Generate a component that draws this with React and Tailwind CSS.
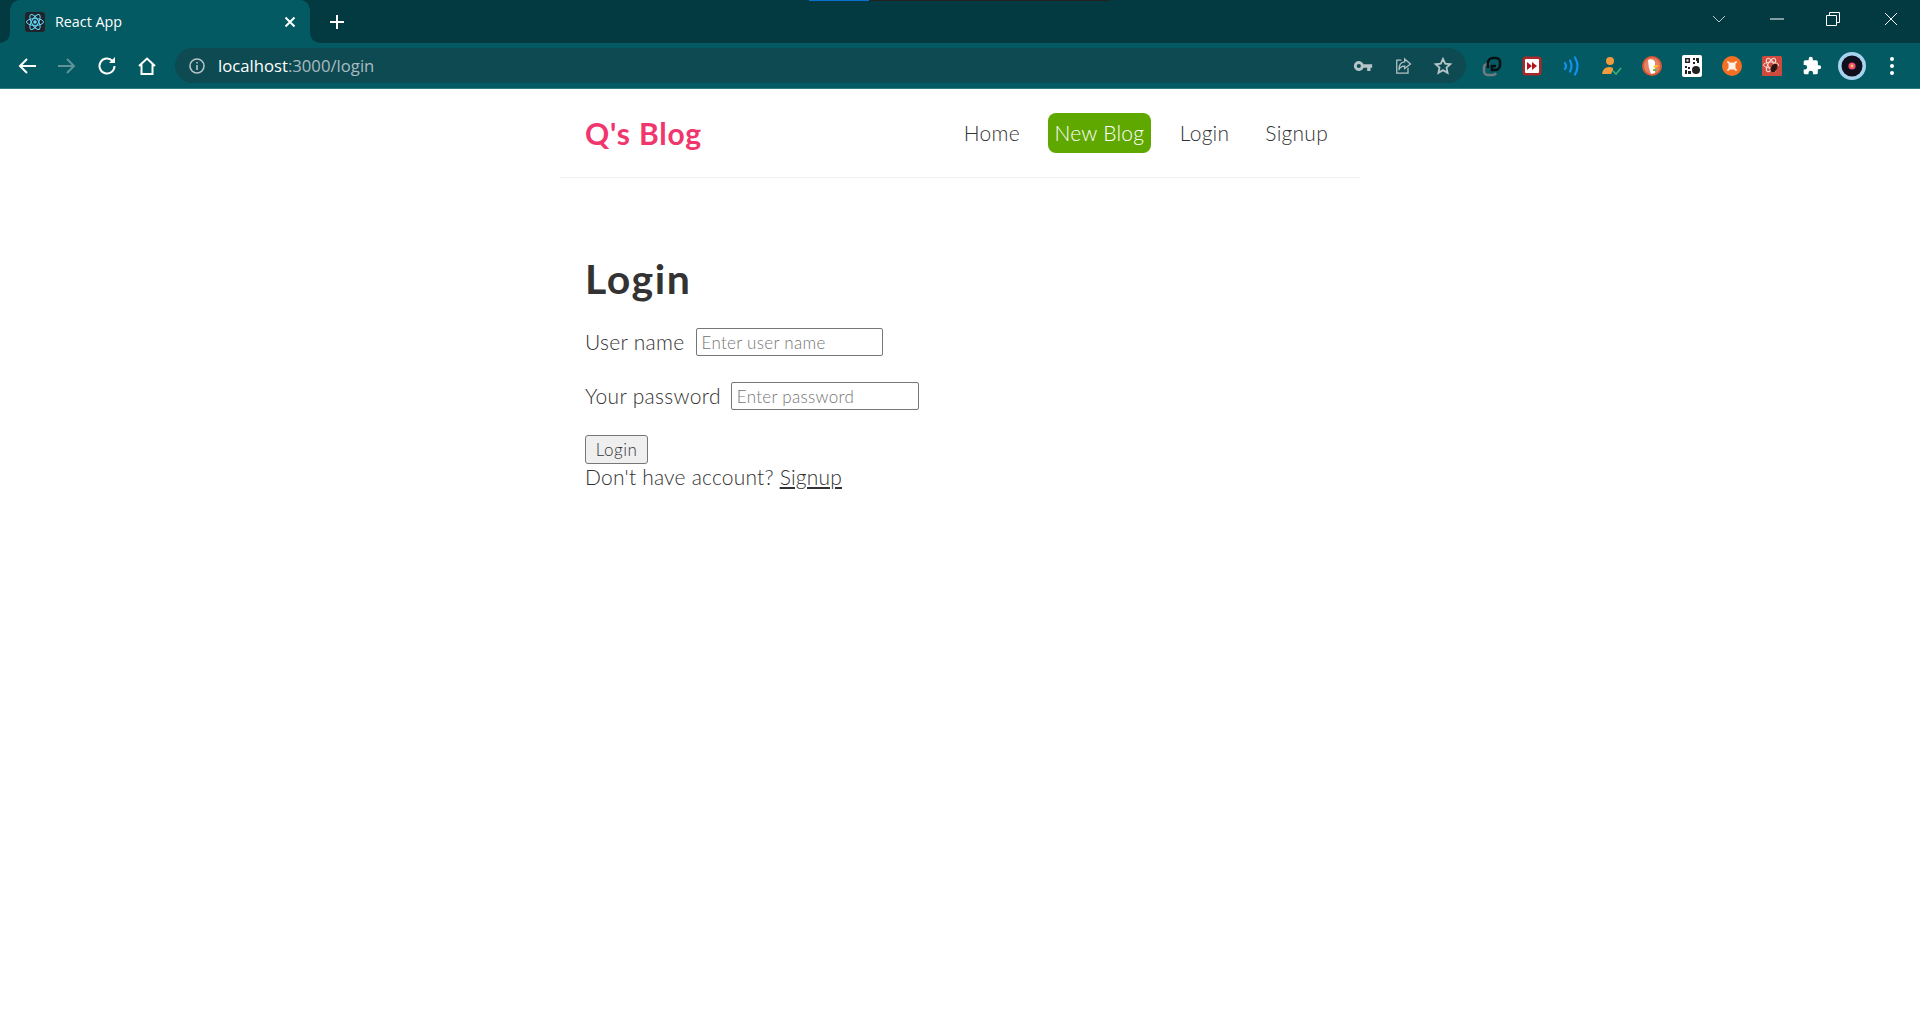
import React from 'react';

const uiFont = { fontFamily: '"Open Sans", "Noto Sans", sans-serif' };

const ReactFavicon = () => (
  <svg width="20" height="20" viewBox="0 0 20 20" fill="none">
    <rect width="20" height="20" rx="3" fill="#20232a" />
    <circle cx="10" cy="10" r="1.8" fill="#61dafb" />
    <g stroke="#61dafb" strokeWidth="1">
      <ellipse cx="10" cy="10" rx="8.5" ry="3.4" />
      <ellipse cx="10" cy="10" rx="8.5" ry="3.4" transform="rotate(60 10 10)" />
      <ellipse cx="10" cy="10" rx="8.5" ry="3.4" transform="rotate(120 10 10)" />
    </g>
  </svg>
);

const ToolIcon = ({ children, className = 'text-white' }) => (
  <svg width="24" height="24" viewBox="0 0 24 24" fill="none" stroke="currentColor" strokeWidth="2" className={className}>
    {children}
  </svg>
);

const ExtIcons = () => (
  <div className="flex items-center ml-[6px]">
    <div className="w-[40px] flex justify-center">
      <svg width="20" height="22" viewBox="0 0 20 22" fill="none" strokeWidth="2.6">
        <path d="M8 9 H5 a3.6 3.6 0 0 0 -3 4 v3 a4 4 0 0 0 4 4 h5 a4 4 0 0 0 3 -2" stroke="#6f7b80" />
        <path d="M6 13 v-5 a5 5 0 0 1 5 -5 h3 a4 4 0 0 1 4 4 v3 a5 5 0 0 1 -5 5 h-3 v-4 h4" stroke="#061014" />
      </svg>
    </div>
    <div className="w-[40px] flex justify-center">
      <svg width="20" height="20" viewBox="0 0 20 20">
        <rect x="0.5" y="0.5" width="19" height="19" rx="3" fill="#a82a2a" />
        <rect x="3" y="3" width="14" height="14" rx="1" fill="#fff" />
        <path d="M5 6 L10 10 L5 14 Z M10 6 L15 10 L10 14 Z" fill="#b3171d" />
      </svg>
    </div>
    <div className="w-[40px] flex justify-center">
      <svg width="20" height="20" viewBox="0 0 20 20" fill="none" stroke="#0f92f0" strokeWidth="2.2" strokeLinecap="round">
        <path d="M3 7 Q5 10 3 13" />
        <path d="M8 4.5 Q11 10 8 15.5" />
        <path d="M13 1.5 Q18 10 13 18.5" />
      </svg>
    </div>
    <div className="w-[40px] flex justify-center">
      <svg width="20" height="20" viewBox="0 0 20 20" fill="none">
        <circle cx="8" cy="5" r="4" fill="#f29a3e" />
        <path d="M0 18 Q1 11 7 11 Q12 11 11 14 L9 18 Z" fill="#f29a3e" />
        <path d="M11 15 L14 18 L19 12" stroke="#3bb273" strokeWidth="1.6" />
      </svg>
    </div>
    <div className="w-[40px] flex justify-center">
      <svg width="20" height="20" viewBox="0 0 20 20">
        <circle cx="10" cy="10" r="10" fill="#de5833" />
        <circle cx="10" cy="10" r="8" fill="#fff" opacity="0.25" />
        <path d="M6 4 Q11 2 13 6 L13 17 L9 18 Q6 11 6 4 Z" fill="#fff" />
        <path d="M11 10 L16 9 L15 11 L12 12 Z" fill="#fdd20a" />
        <path d="M11 13 L15 13 L14 15 L11 15 Z" fill="#65bc46" />
      </svg>
    </div>
    <div className="w-[40px] flex justify-center">
      <svg width="20" height="22" viewBox="0 0 20 22">
        <rect width="20" height="22" rx="2" fill="#fff" />
        <g fill="#222">
          <path d="M3 3 h5 v5 h-5 Z M4.5 4.5 v2 h2 v-2 Z" fillRule="evenodd" />
          <path d="M11 3 h2 v2 h-2 Z M14 3 h3 v5 h-2 v-2 h-1 Z M11 7 h2 v2 h-2 Z" />
          <path d="M3 11 h2 v2 h-2 Z M6 12 h2 v2 h-2 Z M3 15 h2 v4 h-2 Z M6 16 h3 v3 h-3 Z" />
          <circle cx="14" cy="15" r="4" />
        </g>
      </svg>
    </div>
    <div className="w-[40px] flex justify-center">
      <svg width="20" height="20" viewBox="0 0 20 20">
        <circle cx="10" cy="10" r="10" fill="#f36f21" />
        <rect x="6.5" y="6.5" width="7" height="7" rx="2" fill="#fff" opacity="0.9" />
        <path d="M5 5 L8 6 L6 8 Z M15 5 L14 8 L12 6 Z M5 15 L6 12 L8 14 Z M15 15 L12 14 L14 12 Z" fill="#fff" />
      </svg>
    </div>
    <div className="w-[40px] flex justify-center">
      <svg width="20" height="20" viewBox="0 0 20 20" fill="none">
        <rect width="20" height="20" rx="1.5" fill="#cf4a3c" />
        <g stroke="#f6d5cf" strokeWidth="1">
          <ellipse cx="9" cy="9" rx="7.5" ry="3" />
          <ellipse cx="9" cy="9" rx="7.5" ry="3" transform="rotate(60 9 9)" />
          <ellipse cx="9" cy="9" rx="7.5" ry="3" transform="rotate(120 9 9)" />
        </g>
        <ellipse cx="12" cy="12" rx="3" ry="4.5" fill="#2a1512" transform="rotate(30 12 12)" />
      </svg>
    </div>
    <div className="w-[40px] flex justify-center">
      <svg width="20" height="20" viewBox="0 0 24 24" fill="#fff">
        <path d="M20.5 11H19V7a2 2 0 0 0-2-2h-4V3.5a2.5 2.5 0 0 0-5 0V5H4a2 2 0 0 0-2 2v3.8h1.5a2.7 2.7 0 0 1 0 5.4H2V20a2 2 0 0 0 2 2h3.8v-1.5a2.7 2.7 0 0 1 5.4 0V22H17a2 2 0 0 0 2-2v-4h1.5a2.5 2.5 0 0 0 0-5z" />
      </svg>
    </div>
    <div className="w-[40px] flex justify-center">
      <svg width="28" height="28" viewBox="0 0 28 28">
        <circle cx="14" cy="14" r="14" fill="#a8d3f0" />
        <circle cx="14" cy="14" r="10.5" fill="#10101c" />
        <circle cx="14" cy="14" r="3.6" fill="#ef4a73" />
        <circle cx="14" cy="14" r="1.4" fill="#f6d04d" />
      </svg>
    </div>
    <div className="w-[40px] flex flex-col items-center gap-[3px]">
      <span className="w-[4px] h-[4px] rounded-full bg-white" />
      <span className="w-[4px] h-[4px] rounded-full bg-white" />
      <span className="w-[4px] h-[4px] rounded-full bg-white" />
    </div>
  </div>
);

const BrowserChrome = () => (
  <header className="relative" style={uiFont}>
    {/* loading strip along the top edge */}
    <div className="absolute top-0 left-[809px] w-[60px] h-px bg-[#0b6fd0]" />
    <div className="absolute top-0 left-[869px] w-[241px] h-px bg-[#222222]" />

    <div className="flex h-[43px] bg-[#033a42]">
      <div className="w-[10px] bg-[#045a62]">
        <div className="h-full bg-[#033a42] rounded-br-[10px]" />
      </div>
      <div className="w-[300px] bg-[#045a62] rounded-t-[10px] flex items-center pl-[15px] pr-[12px]">
        <ReactFavicon />
        <span className="ml-[10px] flex-1 text-[14.3px] text-white">React App</span>
        <svg width="16" height="16" viewBox="0 0 16 16" stroke="#fff" strokeWidth="2">
          <path d="M3.5 3.5 L12.5 12.5 M12.5 3.5 L3.5 12.5" />
        </svg>
      </div>
      <div className="w-[10px] bg-[#045a62]">
        <div className="h-full bg-[#033a42] rounded-bl-[10px]" />
      </div>
      <div className="ml-[9px] flex items-center">
        <svg width="16" height="16" viewBox="0 0 16 16" stroke="#fff" strokeWidth="2">
          <path d="M8 1 V15 M1 8 H15" />
        </svg>
      </div>
      <div className="flex-1" />
      <div className="flex items-center text-white h-[37px]">
        <svg width="14" height="8" viewBox="0 0 14 8" fill="none" stroke="#b8c8cc" strokeWidth="1">
          <path d="M1 1 L7 7 L13 1" />
        </svg>
        <svg className="ml-[44px]" width="14" height="2" viewBox="0 0 14 2" stroke="#fff">
          <path d="M0 1 H14" />
        </svg>
        <svg className="ml-[42px]" width="14" height="14" viewBox="0 0 14 14" fill="none" stroke="#fff">
          <path d="M0.5 3.5 H10.5 V13.5 H0.5 Z M3.5 3.5 V0.5 H13.5 V10.5 H10.5" />
        </svg>
        <svg className="ml-[44px] mr-[22px]" width="14" height="14" viewBox="0 0 14 14" stroke="#fff">
          <path d="M1 1 L13 13 M13 1 L1 13" />
        </svg>
      </div>
    </div>

    <div className="flex items-center h-[46px] bg-[#045a62] border-b border-[#2f7c83] pl-[15px] pr-[8px]">
      <div className="flex items-center gap-[16px]">
        <ToolIcon>
          <path d="M21 12 H5 M12 5 L5 12 L12 19" />
        </ToolIcon>
        <ToolIcon className="text-[#5f9399]">
          <path d="M3 12 H19 M12 5 L19 12 L12 19" />
        </ToolIcon>
        <ToolIcon>
          <path d="M19.5 12 a7.5 7.5 0 1 1 -2.2 -5.3" />
          <path d="M20 3 V9 H14 Z" fill="#fff" stroke="none" />
        </ToolIcon>
        <ToolIcon>
          <path d="M4 12 L12 4.5 L20 12 M6.5 10.5 V20 H17.5 V10.5" strokeLinejoin="miter" />
        </ToolIcon>
      </div>

      <div className="ml-[16px] flex-1 h-[35px] rounded-full bg-[#0e4a52] flex items-center pl-[13px] pr-[13px]">
        <svg width="18" height="18" viewBox="0 0 18 18" fill="none" stroke="#b4c4c7" strokeWidth="1.6">
          <circle cx="9" cy="9" r="7" />
          <path d="M9 8 V13 M9 5 V6.6" />
        </svg>
        <div className="ml-[12px] flex-1 text-[16.7px]">
          <span className="text-white">localhost</span>
          <span className="text-[#a9bcc0]">:3000/login</span>
        </div>
        <div className="flex items-center gap-[20px] text-[#b4c4c7]">
          <svg width="20" height="20" viewBox="0 0 24 24" fill="currentColor">
            <path d="M12.65 10A6 6 0 1 0 12.65 14H17v4h4v-4h2v-4H12.65zM7 14.5a2.5 2.5 0 1 1 0-5 2.5 2.5 0 0 1 0 5z" />
          </svg>
          <svg width="20" height="20" viewBox="0 0 24 24" fill="none" stroke="currentColor" strokeWidth="1.5">
            <path d="M10 5 H4.5 V20.5 H18 V14" />
            <path d="M14 3.5 L21 9.5 L14 15 V12 Q8 12 7 17 Q7 7.5 14 7 Z" />
          </svg>
          <svg width="20" height="20" viewBox="0 0 24 24" fill="none" stroke="currentColor" strokeWidth="2.2">
            <path d="M12 3.5 L14.6 9.2 L20.8 9.9 L16.2 14 L17.5 20.2 L12 17 L6.5 20.2 L7.8 14 L3.2 9.9 L9.4 9.2 Z" />
          </svg>
        </div>
      </div>

      <ExtIcons />
    </div>
  </header>
);

const Navbar = () => (
  <nav className="h-[89px] flex items-center border-b border-[#f2f2f2] pl-[25px] pr-[32px]">
    <h1 className="flex-1 text-[#f1356d] text-[30px] font-bold tracking-[0.8px]">Q's Blog</h1>
    <div className="flex items-center text-[21px] font-light tracking-[0.25px] text-[#333333]">
      <a>Home</a>
      <a className="ml-[28px] h-[40px] w-[103px] flex items-center justify-center rounded-[8px] bg-[#5fa800] text-white">New Blog</a>
      <a className="ml-[29px]">Login</a>
      <a className="ml-[36px]">Signup</a>
    </div>
  </nav>
);

const LoginForm = () => (
  <main className="pl-[25px] pt-[77px] text-[21px] font-light tracking-[0.3px] text-[#333333]">
    <h2 className="text-[41px] leading-[48px] font-bold tracking-[1.5px] text-[#333333]">Login</h2>
    <form className="mt-[25px]">
      <div className="flex items-center h-[28px]">
        <label>User name</label>
        <input placeholder="Enter user name" className="ml-[11px] w-[187px] h-[28px] px-[5px] text-[17px] tracking-[0.3px] border border-[#767676] rounded-[2px] placeholder:text-[#757575]" />
      </div>
      <div className="flex items-center h-[28px] mt-[26px]">
        <label>Your password</label>
        <input type="password" placeholder="Enter password" className="ml-[10px] w-[188px] h-[28px] px-[5px] text-[17px] tracking-[0.3px] border border-[#767676] rounded-[2px] placeholder:text-[#757575]" />
      </div>
      <button type="button" className="block mt-[25px] w-[63px] h-[29px] text-[17px] tracking-[0.5px] bg-[#efefef] border border-[#767676] rounded-[3px]">Login</button>
      <p className="leading-[26px] tracking-[0.2px]">
        Don't have account? <a className="underline">Signup</a>
      </p>
    </form>
  </main>
);

export default function App() {
  return (
    <div className="min-h-[1017px] bg-white" style={{ fontFamily: 'Lato, "Open Sans", sans-serif' }}>
      <BrowserChrome />
      <div className="w-[800px] ml-[560px]">
        <Navbar />
        <LoginForm />
      </div>
    </div>
  );
}
